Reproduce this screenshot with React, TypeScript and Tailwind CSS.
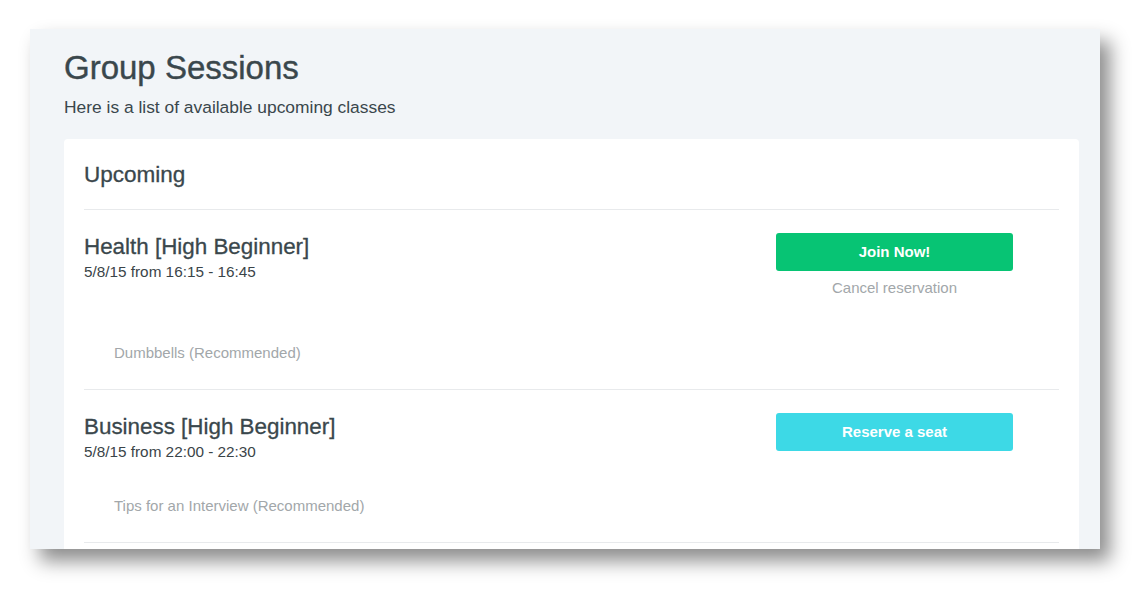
const sessions = [
  {
    title: "Health [High Beginner]",
    time: "5/8/15 from 16:15 - 16:45",
    note: "Dumbbells (Recommended)",
    action: "Join Now!",
    color: "bg-[#07c474]",
    cancel: true,
    noteGap: "mt-[45px]",
  },
  {
    title: "Business [High Beginner]",
    time: "5/8/15 from 22:00 - 22:30",
    note: "Tips for an Interview (Recommended)",
    action: "Reserve a seat",
    color: "bg-[#3dd9e6]",
    cancel: false,
    noteGap: "mt-[33px]",
  },
];

export default function App() {
  return (
    <div
      className="min-h-[611px] bg-white pl-[30px] pt-[29px]"
      style={{ fontFamily: '"Liberation Sans", Arial, sans-serif' }}
    >
      <div className="w-[1070px] h-[520px] overflow-hidden bg-[#f2f5f8] shadow-[10px_12px_18px_rgba(0,0,0,0.45)] pl-[34px] pr-[21px] pt-[19px]">
        <h1 className="text-[33px] leading-[40px] text-[#3a474c] [-webkit-text-stroke:0.4px_#3a474c]">
          Group Sessions
        </h1>
        <p className="mt-[8px] text-[17.4px] leading-[22px] text-[#3a474c]">
          Here is a list of available upcoming classes
        </p>

        {/* Upcoming card */}
        <div className="mt-[21px] bg-white rounded-[4px] px-[20px] pb-[40px]">
          <div className="pt-[22px] pb-[20px] border-b border-[#e8eaec]">
            <h2 className="text-[22.5px] leading-[28px] text-[#3a474c] [-webkit-text-stroke:0.3px_#3a474c]">
              Upcoming
            </h2>
          </div>

          {sessions.map((s) => (
            <div key={s.title} className="border-b border-[#e8eaec] pt-[23px] pb-[26px]">
              <div className="flex justify-between items-start">
                <div>
                  <div className="text-[22.4px] leading-[28px] text-[#3a474c] [-webkit-text-stroke:0.3px_#3a474c]">
                    {s.title}
                  </div>
                  <div className="text-[15.3px] leading-[22px] text-[#3a4448]">{s.time}</div>
                </div>
                <div className="w-[237px] mr-[46px] flex flex-col items-center">
                  <button
                    className={`w-full h-[38px] rounded-[3px] ${s.color} text-white text-[15px] font-bold`}
                  >
                    {s.action}
                  </button>
                  {s.cancel && (
                    <div className="mt-[7px] text-[15px] leading-[20px] text-[#a2a7aa]">
                      Cancel reservation
                    </div>
                  )}
                </div>
              </div>
              <div className={`${s.noteGap} pl-[30px] text-[15px] leading-[20px] text-[#a2a7aa]`}>
                {s.note}
              </div>
            </div>
          ))}
        </div>
      </div>
    </div>
  );
}
